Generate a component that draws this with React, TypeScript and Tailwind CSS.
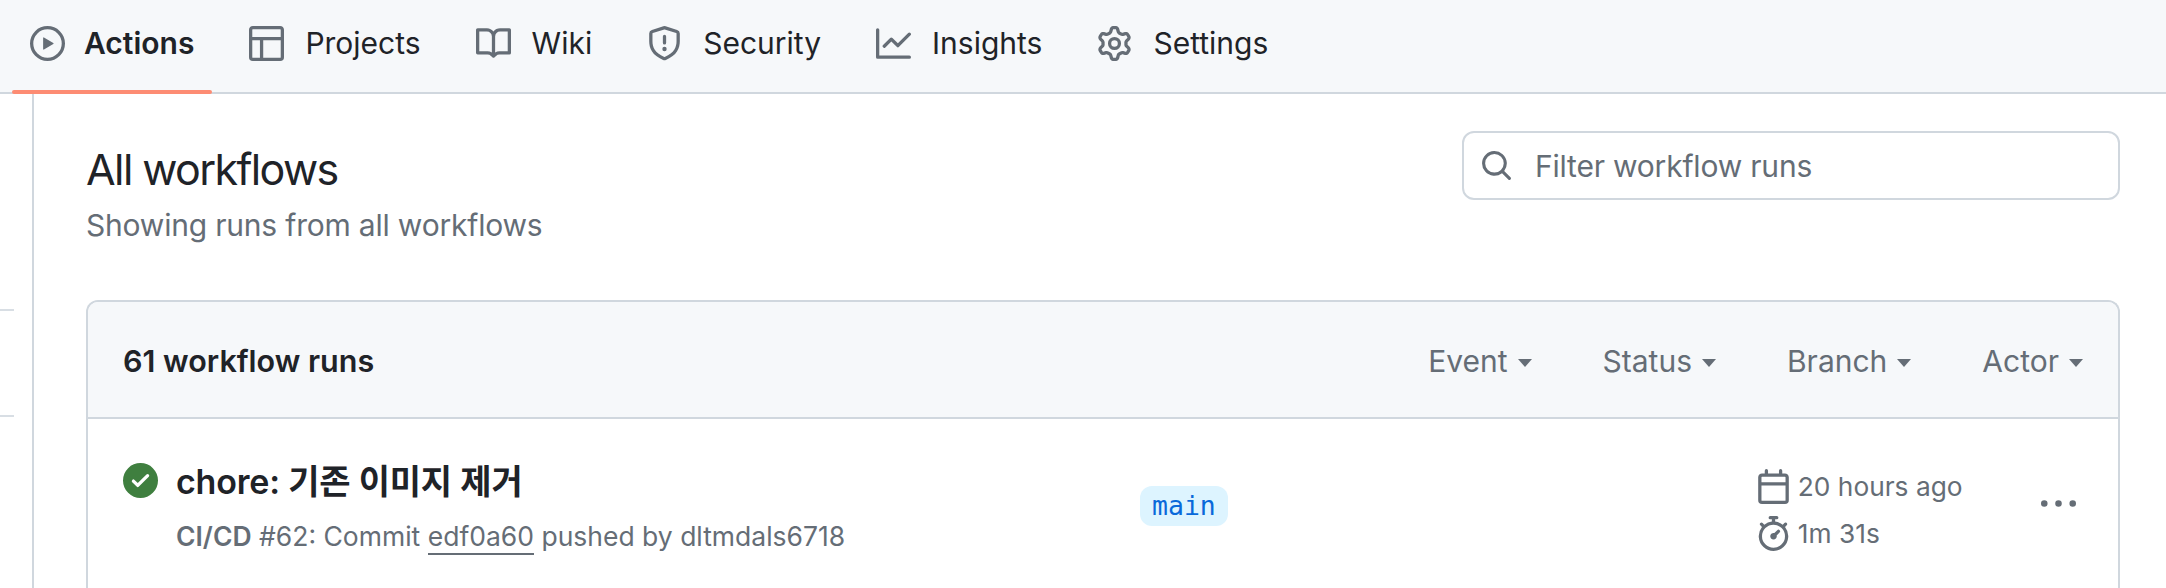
const icons = {
  play: "M8 0a8 8 0 1 1 0 16A8 8 0 0 1 8 0ZM1.5 8a6.5 6.5 0 1 0 13 0 6.5 6.5 0 0 0-13 0Zm4.879-2.773 4.264 2.559a.25.25 0 0 1 0 .428l-4.264 2.559A.25.25 0 0 1 6 10.559V5.442a.25.25 0 0 1 .379-.215Z",
  table: "M0 1.75C0 .784.784 0 1.75 0h12.5C15.216 0 16 .784 16 1.75v12.5A1.75 1.75 0 0 1 14.25 16H1.75A1.75 1.75 0 0 1 0 14.25ZM6.5 6.5v8h7.75a.25.25 0 0 0 .25-.25V6.5Zm8-1.5V1.75a.25.25 0 0 0-.25-.25H1.75a.25.25 0 0 0-.25.25V5Zm-13 1.5v7.75c0 .138.112.25.25.25H5v-8Z",
  book: "M0 1.75A.75.75 0 0 1 .75 1h4.253c1.227 0 2.317.59 3 1.501A3.743 3.743 0 0 1 11.006 1h4.245a.75.75 0 0 1 .75.75v10.5a.75.75 0 0 1-.75.75h-4.507a2.25 2.25 0 0 0-1.591.659l-.622.621a.75.75 0 0 1-1.06 0l-.622-.621A2.25 2.25 0 0 0 5.258 13H.75a.75.75 0 0 1-.75-.75Zm7.251 10.324.004-5.073-.002-2.253A2.25 2.25 0 0 0 5.003 2.5H1.5v9h3.757a3.75 3.75 0 0 1 1.994.574ZM8.755 4.75l-.004 7.322a3.752 3.752 0 0 1 1.992-.572H14.5v-9h-3.495a2.25 2.25 0 0 0-2.25 2.25Z",
  shield: "M7.467.133a1.748 1.748 0 0 1 1.066 0l5.25 1.68A1.75 1.75 0 0 1 15 3.48V7c0 1.566-.32 3.182-1.303 4.682-.983 1.498-2.585 2.813-5.032 3.855a1.697 1.697 0 0 1-1.33 0c-2.447-1.042-4.049-2.357-5.032-3.855C1.32 10.182 1 8.566 1 7V3.48a1.75 1.75 0 0 1 1.217-1.667Zm.61 1.429a.25.25 0 0 0-.153 0l-5.25 1.68a.25.25 0 0 0-.174.238V7c0 1.358.275 2.666 1.057 3.86.784 1.194 2.121 2.34 4.366 3.297a.196.196 0 0 0 .154 0c2.245-.956 3.582-2.104 4.366-3.298C13.225 9.666 13.5 8.36 13.5 7V3.48a.25.25 0 0 0-.174-.237l-5.25-1.68ZM8.75 4.75v3a.75.75 0 0 1-1.5 0v-3a.75.75 0 0 1 1.5 0ZM9 10.5a1 1 0 1 1-2 0 1 1 0 0 1 2 0Z",
  graph: "M1.5 1.75V13.5h13.75a.75.75 0 0 1 0 1.5H.75a.75.75 0 0 1-.75-.75V1.75a.75.75 0 0 1 1.5 0Zm14.28 2.53-5.25 5.25a.75.75 0 0 1-1.06 0L7 7.06 4.28 9.78a.751.751 0 0 1-1.042-.018.751.751 0 0 1-.018-1.042l3.25-3.25a.75.75 0 0 1 1.06 0L10 7.94l4.72-4.72a.751.751 0 0 1 1.042.018.751.751 0 0 1 .018 1.042Z",
  gear: "M8 0a8.2 8.2 0 0 1 .701.031C9.444.095 9.99.645 10.16 1.29l.288 1.107c.018.066.079.158.212.224.231.114.454.243.668.386.123.082.233.09.299.071l1.103-.303c.644-.176 1.392.021 1.82.63.27.385.506.792.704 1.218.315.675.111 1.422-.364 1.891l-.814.806c-.049.048-.098.147-.088.294.016.257.016.515 0 .772-.01.147.038.246.088.294l.814.806c.475.469.679 1.216.364 1.891a7.977 7.977 0 0 1-.704 1.217c-.428.61-1.176.807-1.82.63l-1.102-.302c-.067-.019-.177-.011-.3.071a5.909 5.909 0 0 1-.668.386c-.133.066-.194.158-.211.224l-.29 1.106c-.168.646-.715 1.196-1.458 1.26a8.006 8.006 0 0 1-1.402 0c-.743-.064-1.289-.614-1.458-1.26l-.289-1.106c-.018-.066-.079-.158-.212-.224a5.738 5.738 0 0 1-.668-.386c-.123-.082-.233-.09-.299-.071l-1.103.303c-.644.176-1.392-.021-1.82-.63a8.12 8.12 0 0 1-.704-1.218c-.315-.675-.111-1.422.363-1.891l.815-.806c.05-.048.098-.147.088-.294a6.214 6.214 0 0 1 0-.772c.01-.147-.038-.246-.088-.294l-.815-.806C.635 6.045.431 5.298.746 4.623a7.92 7.92 0 0 1 .704-1.217c.428-.61 1.176-.807 1.82-.63l1.102.302c.067.019.177.011.3-.071.214-.143.437-.272.668-.386.133-.066.194-.158.211-.224l.29-1.106C6.009.645 6.556.095 7.299.03 7.53.01 7.764 0 8 0Zm-.571 1.525c-.036.003-.108.036-.137.146l-.289 1.105c-.147.561-.549.967-.998 1.189-.173.086-.34.183-.5.29-.417.278-.97.423-1.529.27l-1.103-.303c-.109-.03-.175.016-.195.045-.22.312-.412.644-.573.99-.014.031-.021.11.059.19l.815.806c.411.406.562.957.53 1.456a4.709 4.709 0 0 0 0 .582c.032.499-.119 1.05-.53 1.456l-.815.806c-.081.08-.073.159-.059.19.162.346.353.677.573.989.02.03.085.076.195.046l1.102-.303c.56-.153 1.113-.008 1.53.27.161.107.328.204.501.29.447.222.85.629.997 1.189l.289 1.105c.029.109.101.143.137.146a6.6 6.6 0 0 0 1.142 0c.036-.003.108-.036.137-.146l.289-1.105c.147-.561.549-.967.998-1.189.173-.086.34-.183.5-.29.417-.278.97-.423 1.529-.27l1.103.303c.109.029.175-.016.195-.045.22-.313.411-.644.573-.99.014-.031.021-.11-.059-.19l-.815-.806c-.411-.406-.562-.957-.53-1.456a4.709 4.709 0 0 0 0-.582c-.032-.499.119-1.05.53-1.456l.815-.806c.081-.08.073-.159.059-.19a6.464 6.464 0 0 0-.573-.989c-.02-.03-.085-.076-.195-.046l-1.102.303c-.56.153-1.113.008-1.53-.27a4.44 4.44 0 0 0-.501-.29c-.447-.222-.85-.629-.997-1.189l-.289-1.105c-.029-.11-.101-.143-.137-.146a6.6 6.6 0 0 0-1.142 0ZM11 8a3 3 0 1 1-6 0 3 3 0 0 1 6 0ZM9.5 8a1.5 1.5 0 1 0-3.001.001A1.5 1.5 0 0 0 9.5 8Z",
  search: "M10.68 11.74a6 6 0 0 1-7.922-8.982 6 6 0 0 1 8.982 7.922l3.04 3.04a.749.749 0 0 1-.326 1.275.749.749 0 0 1-.734-.215ZM11.5 7a4.499 4.499 0 1 0-8.997 0A4.499 4.499 0 0 0 11.5 7Z",
  calendar: "M4.75 0a.75.75 0 0 1 .75.75V2h5V.75a.75.75 0 0 1 1.5 0V2h1.25c.966 0 1.75.784 1.75 1.75v10.5A1.75 1.75 0 0 1 13.25 16H2.75A1.75 1.75 0 0 1 1 14.25V3.75C1 2.784 1.784 2 2.75 2H4V.75A.75.75 0 0 1 4.75 0ZM2.5 7.5v6.75c0 .138.112.25.25.25h10.5a.25.25 0 0 0 .25-.25V7.5Zm10.75-4H2.75a.25.25 0 0 0-.25.25V6h11V3.75a.25.25 0 0 0-.25-.25Z",
  stopwatch: "M5.75.75A.75.75 0 0 1 6.5 0h3a.75.75 0 0 1 0 1.5h-.75v1l-.001.041a6.724 6.724 0 0 1 3.464 1.435l.007-.006.75-.75a.749.749 0 0 1 1.275.326.749.749 0 0 1-.215.734l-.75.75-.006.007a6.75 6.75 0 1 1-10.548 0L2.72 5.03l-.75-.75a.751.751 0 0 1 .018-1.042.751.751 0 0 1 1.042-.018l.75.75.007.006A6.72 6.72 0 0 1 7.25 2.541V1.5H6.5a.75.75 0 0 1-.75-.75ZM8 14.5a5.25 5.25 0 1 0-.001-10.501A5.25 5.25 0 0 0 8 14.5Zm.389-6.7 1.33-1.33a.75.75 0 1 1 1.061 1.06L9.45 8.861A1.503 1.503 0 0 1 8 10.75a1.499 1.499 0 1 1 .389-2.95Z",
  kebab: "M8 9a1.5 1.5 0 1 0 0-3 1.5 1.5 0 0 0 0 3ZM1.5 9a1.5 1.5 0 1 0 0-3 1.5 1.5 0 0 0 0 3Zm13 0a1.5 1.5 0 1 0 0-3 1.5 1.5 0 0 0 0 3Z",
  check: "M8 16A8 8 0 1 1 8 0a8 8 0 0 1 0 16Zm3.78-9.72a.751.751 0 0 0-.018-1.042.751.751 0 0 0-1.042-.018L6.75 9.19 5.28 7.72a.751.751 0 0 0-1.042.018.751.751 0 0 0-.018 1.042l2 2a.75.75 0 0 0 1.06 0Z",
};

type IconName = keyof typeof icons;

function Octicon({ name, className }: { name: IconName; className?: string }) {
  return (
    <svg viewBox="0 0 16 16" fill="currentColor" className={className}>
      <path d={icons[name]} />
    </svg>
  );
}

const tabs: { label: string; icon: IconName; active?: boolean }[] = [
  { label: "Actions", icon: "play", active: true },
  { label: "Projects", icon: "table" },
  { label: "Wiki", icon: "book" },
  { label: "Security", icon: "shield" },
  { label: "Insights", icon: "graph" },
  { label: "Settings", icon: "gear" },
];

const filters = ["Event", "Status", "Branch", "Actor"];

export default function App() {
  return (
    <div className="h-[588px] w-full overflow-hidden bg-white font-['Inter','Noto_Sans_CJK_KR',sans-serif] text-[#1f2328]">
      <nav className="flex h-[94px] items-stretch gap-[19px] border-b-2 border-[#d0d7de] bg-[#f6f8fa] pl-3">
        {tabs.map((tab) => (
          <a
            key={tab.label}
            className={`relative flex items-center px-[18px] pb-[5px] text-[30px] ${tab.active ? "gap-[19px] font-semibold" : "gap-[21px] font-normal"}`}
          >
            <Octicon name={tab.icon} className="size-[35px] shrink-0 text-[#656d76]" />
            {tab.label}
            {tab.active && (
              <span className="absolute inset-x-0 -bottom-[2px] h-1 rounded-full bg-[#fd8c73]" />
            )}
          </a>
        ))}
      </nav>

      <div className="flex h-[494px]">
        <aside className="flex w-[34px] shrink-0 flex-col border-r-2 border-[#d0d7de] pt-[215px]">
          <div className="h-[2px] w-[14px] bg-[#d8dee4]" />
          <div className="mt-[104px] h-[2px] w-[14px] bg-[#d8dee4]" />
        </aside>

        <main className="min-w-0 flex-1 pl-[52px] pr-[46px]">
          <div className="flex items-start justify-between pt-[37px]">
            <div className="pt-[10px]">
              <h1 className="text-[43px] font-normal leading-[56px] tracking-[-1.6px]">All workflows</h1>
              <p className="mt-[10px] text-[30px] leading-[36px] tracking-[-0.2px] text-[#656d76]">
                Showing runs from all workflows
              </p>
            </div>
            <div className="flex h-[69px] w-[658px] items-center gap-[22px] rounded-xl border-2 border-[#d0d7de] pl-4">
              <Octicon name="search" className="size-[33px] text-[#656d76]" />
              <span className="pt-[2px] text-[30px] tracking-[-0.2px] text-[#656d76]">Filter workflow runs</span>
            </div>
          </div>

          <section className="mt-[57px] h-[400px] rounded-t-xl border-x-2 border-t-2 border-[#d0d7de]">
            <div className="flex h-[117px] items-center justify-between rounded-t-[10px] border-b-2 border-[#d0d7de] bg-[#f6f8fa] px-[35px] pt-[3px]">
              <span className="text-[30.5px] font-semibold">61 workflow runs</span>
              <div className="flex items-center gap-[71px]">
                {filters.map((f) => (
                  <span key={f} className="flex items-center gap-[10px] text-[30px] text-[#656d76]">
                    {f}
                    <span className="mt-1 h-0 w-0 border-x-[7.5px] border-t-[8px] border-x-transparent border-t-[#656d76]" />
                  </span>
                ))}
              </div>
            </div>

            <div className="flex items-start pl-[35px] pr-[42px] pt-[43px]">
              <Octicon name="check" className="mt-[1px] size-[35px] shrink-0 text-[#3f7f3f]" />
              <div className="ml-[18px] w-[964px] shrink-0">
                <div className="text-[34px] font-semibold leading-[40px] tracking-[-0.2px]">chore: 기존 이미지 제거</div>
                <div className="mt-[16px] text-[26.5px] leading-[36px] text-[#656d76]">
                  <span className="font-semibold">CI/CD</span> #62: Commit{" "}
                  <span className="border-b-2 border-[#656d76] pb-[1px]">edf0a60</span> pushed by dltmdals6718
                </div>
              </div>
              <span className="mt-[24px] shrink-0 rounded-xl bg-[#ddf4ff] px-[12px] py-[2px] font-['DejaVu_Sans_Mono',monospace] text-[26.5px] leading-[36px] text-[#0969da]">
                main
              </span>
              <div className="ml-[528px] shrink-0 pt-[7px]">
                <div className="flex items-center gap-[7px] text-[26.3px] leading-[35px] text-[#656d76]">
                  <Octicon name="calendar" className="size-[35px] shrink-0" />
                  20 hours ago
                </div>
                <div className="mt-[12px] flex items-center gap-[7px] text-[26.3px] leading-[35px] text-[#656d76]">
                  <Octicon name="stopwatch" className="size-[35px] shrink-0" />
                  1m 31s
                </div>
              </div>
              <Octicon name="kebab" className="ml-auto mt-[25px] size-[35px] shrink-0 text-[#656d76]" />
            </div>
          </section>
        </main>
      </div>
    </div>
  );
}
